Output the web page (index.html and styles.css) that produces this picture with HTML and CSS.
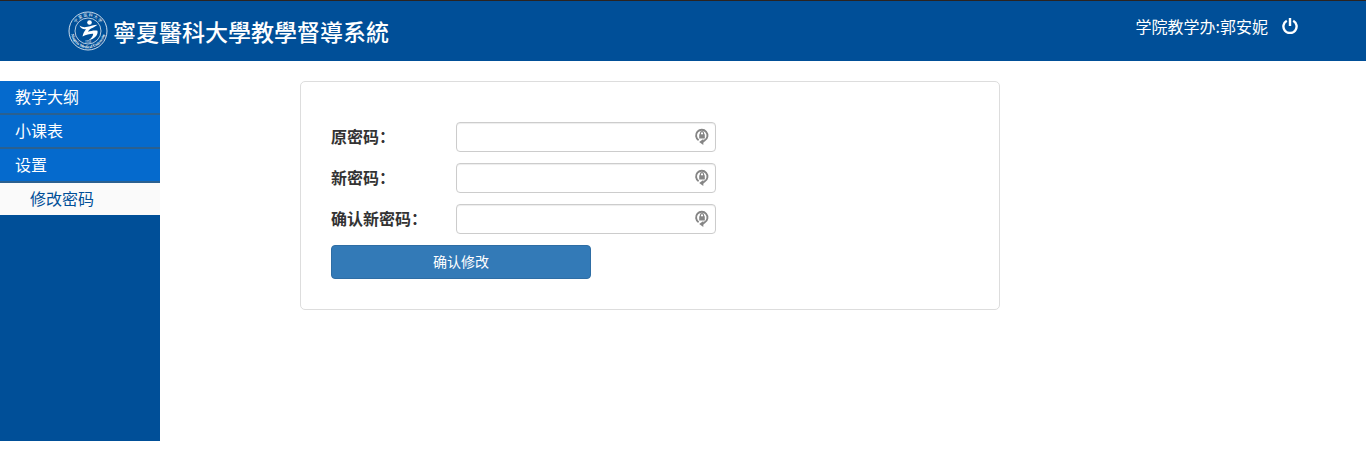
FILE: index.html
```html
<!DOCTYPE html>
<html lang="zh-CN">
<head>
    <meta charset="UTF-8">
    <meta name="viewport" content="width=device-width, initial-scale=1.0">
    <title>寧夏醫科大學教學督導系統</title>
    <link rel="stylesheet" href="styles.css">
</head>
<body>
    <header class="header">
        <div class="brand">
            <svg class="logo" viewBox="0 0 40 40" aria-hidden="true">
                <defs>
                    <path id="ringTop" d="M5.500 20a14.500 14.500 0 0 1 29 0"/>
                    <path id="ringBottom" d="M2.800 20a17.200 17.200 0 0 0 34.400 0"/>
                </defs>
                <circle cx="20" cy="20" r="19" fill="none" stroke="#fff" stroke-width="0.8"/>
                <circle cx="20" cy="20" r="13" fill="none" stroke="#fff" stroke-width="0.7"/>
                <text class="ring-cn" text-anchor="middle"><textPath href="#ringTop" startOffset="50%">宁 夏 医 科 大 学</textPath></text>
                <text class="ring-en" text-anchor="middle"><textPath href="#ringBottom" startOffset="50%">Ningxia Medical University</textPath></text>
                <text class="ring-year" x="20" y="32" text-anchor="middle">1958</text>
                <circle cx="21.500" cy="11.500" r="2.300" fill="#fff"/>
                <path d="M11.500 14.500c2.500 1.800 5 2 8 1.300 3.500-.8 6-2 10-2.100-1.800 1.500-3.800 2.800-6.500 3.800-1.500 1-2.300 2-3 3.200 3-.9 6.500-1.700 9.500-1 .8 3.800-2.500 8.300-9.500 9.800 3.300-2.200 5.200-4.500 5.200-6.800-3-.2-6.700.9-10.700 2.700.7-3 2-5.500 3.500-7.200-3 .4-5.300-.8-6.500-3.700z" fill="#fff"/>
            </svg>
            <h1 class="title">寧夏醫科大學教學督導系統</h1>
        </div>
        <div class="user">
            <span>学院教学办:郭安妮</span>
            <a class="logout" href="#" aria-label="退出">
                <svg viewBox="0 0 16 16" aria-hidden="true">
                    <path d="M4.800 2.700A6.600 6.600 0 1 0 11.200 2.700" fill="none" stroke="#fff" stroke-width="2.400"/>
                    <path d="M8 0V8" stroke="#fff" stroke-width="2.400"/>
                </svg>
            </a>
        </div>
    </header>

    <div class="container">
        <nav class="sidebar">
            <a class="menu" href="#">教学大纲</a>
            <a class="menu" href="#">小课表</a>
            <a class="menu" href="#">设置</a>
            <a class="submenu" href="#">修改密码</a>
        </nav>

        <main class="main">
            <form class="panel">
                <div class="row">
                    <label for="oldPwd">原密码：</label>
                    <div class="field">
                        <input type="password" id="oldPwd">
                        <svg class="lock" viewBox="0 0 16 18" aria-hidden="true"><use href="#lockIcon"/></svg>
                    </div>
                </div>
                <div class="row">
                    <label for="newPwd">新密码：</label>
                    <div class="field">
                        <input type="password" id="newPwd">
                        <svg class="lock" viewBox="0 0 16 18" aria-hidden="true"><use href="#lockIcon"/></svg>
                    </div>
                </div>
                <div class="row">
                    <label for="newPwd2">确认新密码：</label>
                    <div class="field">
                        <input type="password" id="newPwd2">
                        <svg class="lock" viewBox="0 0 16 18" aria-hidden="true"><use href="#lockIcon"/></svg>
                    </div>
                </div>
                <button class="btn" type="button">确认修改</button>
            </form>
        </main>
    </div>

    <svg class="symbols" aria-hidden="true">
        <symbol id="lockIcon" viewBox="0 0 16 18">
            <path d="M4.600 13.200A5.700 5.700 0 1 1 10.800 13.300L8.500 15" fill="none" stroke="#858585" stroke-width="1.900"/>
            <path d="M9.300 11.900v6L5.200 15z" fill="#858585"/>
            <path d="M5.200 7.300h5.600v4.200H5.200z" fill="#858585"/>
            <path d="M6.400 8V6.200a1.600 1.600 0 0 1 3.200 0V8" fill="none" stroke="#858585" stroke-width="1.200"/>
        </symbol>
    </svg>
</body>
</html>
```
FILE: styles.css
```css
* {
    box-sizing: border-box;
}

body {
    margin: 0;
    background: #fff;
    color: #333;
    font-family: "Noto Sans CJK SC", sans-serif;
    font-size: 16px;
    line-height: 24px;
}

a {
    text-decoration: none;
}

.header {
    display: flex;
    justify-content: space-between;
    align-items: flex-start;
    height: 61px;
    padding: 10px 68px 0;
    border-top: 1px solid #2b2320;
    background: #004f98;
    color: #fff;
}

.brand {
    display: flex;
    align-items: center;
    gap: 5px;
}

.logo {
    width: 40px;
    height: 40px;
}

.ring-cn,
.ring-en,
.ring-year {
    fill: #fff;
    font-size: 4px;
}

.ring-en {
    font-family: "Liberation Serif", serif;
    font-weight: bold;
}

.ring-year {
    font-family: "Liberation Serif", serif;
    font-size: 3px;
}

.title {
    margin: 0;
    font-family: "Noto Sans CJK TC", sans-serif;
    font-size: 23px;
    font-weight: 500;
    line-height: 38px;
}

.user {
    display: flex;
    align-items: center;
    gap: 14px;
    padding-top: 3px;
}

.logout,
.logout svg {
    display: block;
    width: 16px;
    height: 16px;
}

.container {
    display: flex;
    align-items: flex-start;
    margin-top: 20px;
}

.sidebar {
    flex: none;
    width: 160px;
    min-height: calc(100vh - 94px);
    background: #004f98;
}

.menu,
.submenu {
    display: block;
    height: 32px;
    line-height: 30px;
}

.menu {
    height: 34px;
    padding-left: 15px;
    border-bottom: 2px solid #2a6090;
    background: #056acd;
    color: #fff;
}

.submenu {
    padding-left: 30px;
    background: #fafafa;
    color: #004f98;
}

.main {
    flex: 1;
    padding: 0 20px 0 140px;
}

.panel {
    max-width: 700px;
    padding: 40px 30px 30px;
    border: 1px solid #ddd;
    border-radius: 5px;
}

.row {
    display: flex;
    align-items: center;
    margin-bottom: 11px;
}

.row label {
    width: 125px;
    padding-bottom: 2px;
    font-weight: bold;
}

.field {
    position: relative;
    width: 260px;
}

.field input {
    display: block;
    width: 100%;
    height: 30px;
    padding: 4px 28px 4px 10px;
    border: 1px solid #ccc;
    border-radius: 4px;
    box-shadow: inset 0 1px 1px rgba(0, 0, 0, 0.075);
    font-size: 14px;
}

.lock {
    position: absolute;
    top: 5px;
    right: 6px;
    width: 16px;
    height: 18px;
}

.btn {
    display: block;
    width: 260px;
    height: 34px;
    padding: 0 0 2px;
    border: 1px solid #2e6da4;
    border-radius: 4px;
    background: #337ab7;
    color: #fff;
    font-family: inherit;
    font-size: 14px;
    cursor: pointer;
}

.symbols {
    display: none;
}
```
